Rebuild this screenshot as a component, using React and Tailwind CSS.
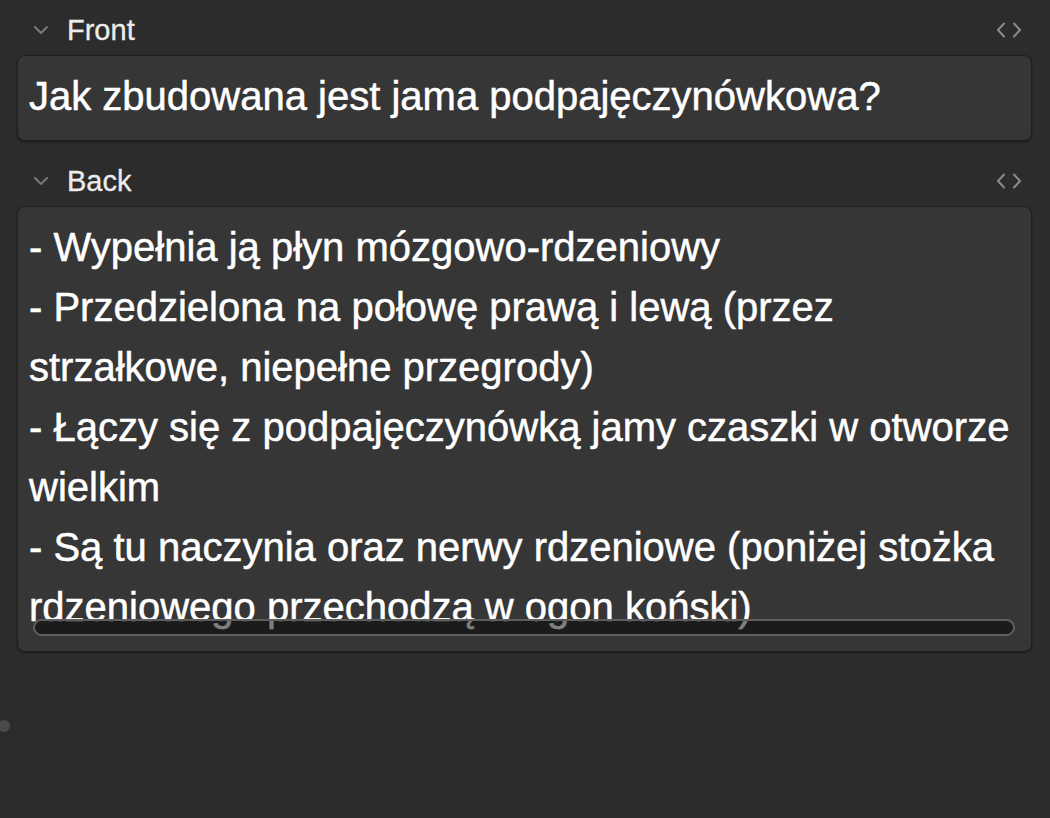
import React from 'react';

const Chevron = () => (
  <svg width="16" height="10" viewBox="0 0 16 10" className="shrink-0">
    <path d="M2 2 L8 8 L14 2" fill="none" stroke="#7a7a7a" strokeWidth="2" strokeLinecap="round" strokeLinejoin="round" />
  </svg>
);

const CodeIcon = () => (
  <svg width="26" height="16" viewBox="0 0 26 16" className="shrink-0">
    <path d="M8 1.5 L2 8 L8 14.5" fill="none" stroke="#8a8a8a" strokeWidth="2" strokeLinecap="round" strokeLinejoin="round" />
    <path d="M18 1.5 L24 8 L18 14.5" fill="none" stroke="#8a8a8a" strokeWidth="2" strokeLinecap="round" strokeLinejoin="round" />
  </svg>
);

const FieldHeader = ({ label, className }) => (
  <div className={`flex items-center h-[50px] pl-[16px] pr-[10px] ${className}`}>
    <Chevron />
    <span className="ml-[18px] text-[29px] text-[#ececec] leading-none [-webkit-text-stroke:0.3px_#ececec]">{label}</span>
    <div className="flex-1" />
    <CodeIcon />
  </div>
);

const backLines = [
  '- Wypełnia ją płyn mózgowo-rdzeniowy',
  '- Przedzielona na połowę prawą i lewą (przez strzałkowe, niepełne przegrody)',
  '- Łączy się z podpajęczynówką jamy czaszki w otworze wielkim',
  '- Są tu naczynia oraz nerwy rdzeniowe (poniżej stożka rdzeniowego przechodzą w ogon koński)',
];

export default function App() {
  return (
    <div
      className="relative w-full h-[818px] bg-[#2c2c2c] overflow-hidden pt-[5px] px-[17px] pr-[18px]"
      style={{ fontFamily: '"Liberation Sans", Arial, sans-serif' }}
    >
      <FieldHeader label="Front" />
      <div className="rounded-[8px] border border-[#1f1f1f] bg-[#363636] shadow-[0_1px_2px_rgba(0,0,0,0.4)] pl-[11px] pr-[12px] pt-[10px] pb-[14px] text-[40px] leading-[60px] text-white [-webkit-text-stroke:0.5px_#fff]">
        Jak zbudowana jest jama podpajęczynówkowa?
      </div>

      <FieldHeader label="Back" className="mt-[15px]" />
      <div className="relative rounded-[8px] border border-[#1f1f1f] bg-[#363636] shadow-[0_1px_2px_rgba(0,0,0,0.4)] pl-[11px] pr-[12px] pt-[10px] pb-[14px] text-[40px] leading-[60px] text-white [-webkit-text-stroke:0.5px_#fff]">
        {backLines.map((line) => (
          <div key={line}>{line}</div>
        ))}
        <div className="absolute left-[15px] right-[16px] bottom-[15px] h-[17px] rounded-full border-2 border-[#5e5e5e] bg-black/50" />
      </div>

      <div className="absolute left-[-2px] top-[720px] w-[12px] h-[12px] rounded-full bg-[#4a4a4a]" />
    </div>
  );
}
